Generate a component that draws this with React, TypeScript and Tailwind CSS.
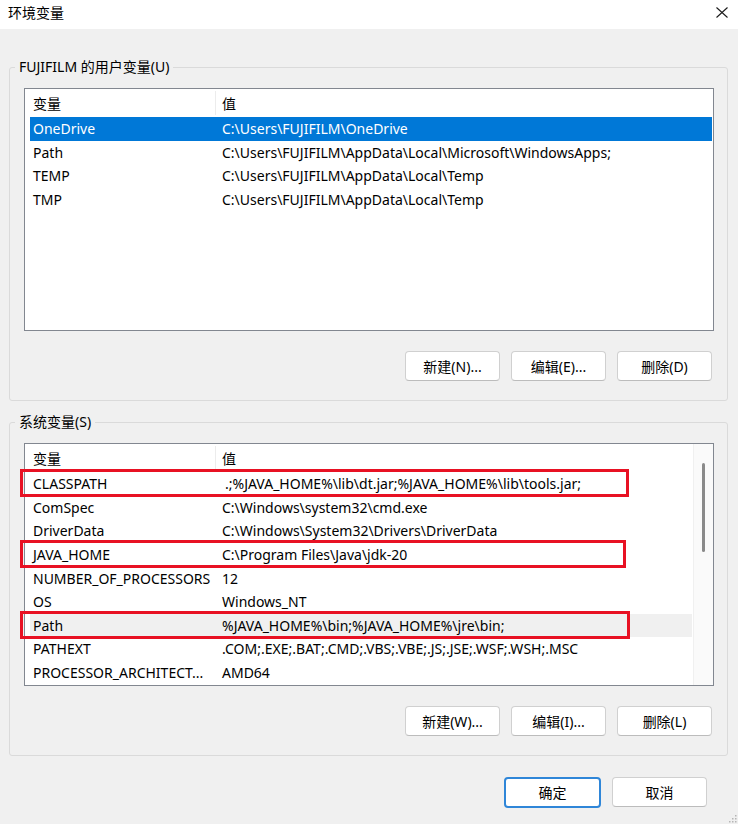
import React from "react";

type Row = {
  name: string;
  value: string;
  mark?: number;
  selected?: boolean;
  hover?: boolean;
  valueIndent?: boolean;
};

const userVars: Row[] = [
  { name: "OneDrive", value: "C:\\Users\\FUJIFILM\\OneDrive", selected: true },
  { name: "Path", value: "C:\\Users\\FUJIFILM\\AppData\\Local\\Microsoft\\WindowsApps;" },
  { name: "TEMP", value: "C:\\Users\\FUJIFILM\\AppData\\Local\\Temp" },
  { name: "TMP", value: "C:\\Users\\FUJIFILM\\AppData\\Local\\Temp" },
];

const sysVars: Row[] = [
  { name: "CLASSPATH", value: ".;%JAVA_HOME%\\lib\\dt.jar;%JAVA_HOME%\\lib\\tools.jar;", mark: 609, valueIndent: true },
  { name: "ComSpec", value: "C:\\Windows\\system32\\cmd.exe" },
  { name: "DriverData", value: "C:\\Windows\\System32\\Drivers\\DriverData" },
  { name: "JAVA_HOME", value: "C:\\Program Files\\Java\\jdk-20", mark: 606 },
  { name: "NUMBER_OF_PROCESSORS", value: "12" },
  { name: "OS", value: "Windows_NT" },
  { name: "Path", value: "%JAVA_HOME%\\bin;%JAVA_HOME%\\jre\\bin;", mark: 610, hover: true },
  { name: "PATHEXT", value: ".COM;.EXE;.BAT;.CMD;.VBS;.VBE;.JS;.JSE;.WSF;.WSH;.MSC" },
  { name: "PROCESSOR_ARCHITECT...", value: "AMD64" },
];

const FONT = "font-['Segoe_UI','Noto_Sans','Noto_Sans_CJK_SC',sans-serif]";

function ListRow({ row }: { row: Row }) {
  return (
    <div
      className={`relative ml-[5px] mr-[1px] flex h-[23.6px] shrink-0 items-center whitespace-nowrap ${
        row.selected ? "bg-[#0078d7] text-white" : row.hover ? "bg-[#f0f0f0] text-black" : "text-black"
      }`}
    >
      <div className="w-[189px] shrink-0 overflow-hidden pl-[3px]">{row.name}</div>
      <div className={row.valueIndent ? "pl-[6px]" : "pl-[3px]"}>{row.value}</div>
      {row.mark && (
        <div
          className="pointer-events-none absolute -left-[10px] -top-[3px] h-[28px] border-[3px] border-[#e81123]"
          style={{ width: row.mark }}
        />
      )}
    </div>
  );
}

function ListHeader() {
  return (
    <div className="flex h-[28px] shrink-0 items-center">
      <div className="w-[190px] pl-[8px]">变量</div>
      <div className="h-[24px] w-px bg-[#ececec]" />
      <div className="pl-[6px]">值</div>
    </div>
  );
}

function Button({ label, primary }: { label: string; primary?: boolean }) {
  return (
    <button
      className={`flex h-[30px] w-[95px] items-center justify-center rounded-[4px] bg-white text-[14px] text-black ${
        primary
          ? "h-[31px] w-[97px] border-2 border-[#2f86d8]"
          : "border border-[#d0d0d0] border-b-[#bcbcbc]"
      }`}
    >
      {label}
    </button>
  );
}

function Group({
  title,
  rows,
  buttons,
  scroll,
  className,
}: {
  title: string;
  rows: Row[];
  buttons: string[];
  scroll?: boolean;
  className?: string;
}) {
  return (
    <fieldset className={`ml-[9px] w-[719px] rounded-[3px] border border-[#dadada] pl-[14px] pr-[13px] pb-[19px] ${className ?? ""}`}>
      <legend className="-ml-[9px] px-[4px] text-[14px] leading-[20px]">{title}</legend>
      <div className="mt-[11px] flex h-[243px] border border-[#828790] bg-white">
        <div className="flex flex-1 flex-col">
          <ListHeader />
          {rows.map((r) => (
            <ListRow key={r.name} row={r} />
          ))}
        </div>
        {scroll && (
          <div className="relative w-[20px] shrink-0 border-l border-[#f0f0f0] bg-[#fafafa]">
            <div className="absolute left-[8px] top-[19px] h-[89px] w-[3px] rounded-full bg-[#8a8a8a]" />
          </div>
        )}
      </div>
      <div className="mt-[20px] flex justify-end gap-[11px] pr-[2px]">
        {buttons.map((b) => (
          <Button key={b} label={b} />
        ))}
      </div>
    </fieldset>
  );
}

export default function App() {
  return (
    <div className={`flex h-[824px] w-[738px] flex-col overflow-hidden bg-[#f0f0f0] text-[14px] text-black ${FONT}`}>
      <div className="flex h-[29px] shrink-0 items-center justify-between bg-white pb-[4px] pl-[8px] pr-[8px]">
        <span className="text-[14px]">环境变量</span>
        <svg width="12" height="11" viewBox="0 0 12 11" className="mr-[2px]">
          <path d="M0.5 0.5 L11.5 10.5 M11.5 0.5 L0.5 10.5" stroke="#1a1a1a" strokeWidth="1.1" fill="none" />
        </svg>
      </div>

      <Group
        className="mt-[28px]"
        title="FUJIFILM 的用户变量(U)"
        rows={userVars}
        buttons={["新建(N)...", "编辑(E)...", "删除(D)"]}
      />

      <Group
        className="mt-[11px]"
        title="系统变量(S)"
        rows={sysVars}
        scroll
        buttons={["新建(W)...", "编辑(I)...", "删除(L)"]}
      />

      <div className="mt-[21px] flex justify-end gap-[11px] pr-[31px]">
        <Button label="确定" primary />
        <Button label="取消" />
      </div>

      <div className="relative flex-1">
        <svg width="9" height="9" viewBox="0 0 9 9" className="absolute bottom-[1px] right-[1px]">
          {[
            [7, 1],
            [4, 4],
            [7, 4],
            [1, 7],
            [4, 7],
            [7, 7],
          ].map(([x, y]) => (
            <rect key={`${x}-${y}`} x={x} y={y} width="1.5" height="1.5" fill="#b5b5b5" />
          ))}
        </svg>
      </div>
    </div>
  );
}
